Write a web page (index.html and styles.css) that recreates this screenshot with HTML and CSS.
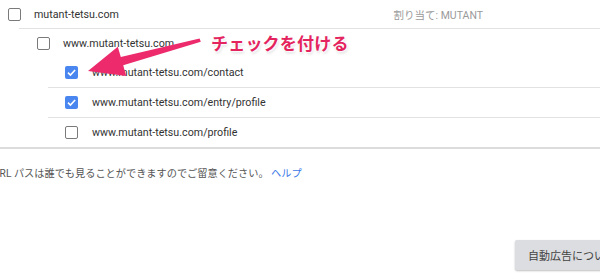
FILE: index.html
```html
<!DOCTYPE html>
<html lang="ja">
<head>
<meta charset="utf-8">
<link rel="stylesheet" href="styles.css">
</head>
<body>
<div class="page">
  <div class="tree">
    <div class="row r1">
      <span class="cb"></span>
      <span class="label">mutant-tetsu.com</span>
      <span class="assign">割り当て: MUTANT</span>
    </div>
    <div class="group">
      <div class="row r2">
        <span class="cb"></span>
        <span class="label">www.mutant-tetsu.com</span>
      </div>
      <div class="sub">
        <div class="row r3">
          <span class="cb checked"><svg viewBox="0 0 13 13" width="13" height="13"><path d="M3 6.7 L5.4 9 L10.1 4" fill="none" stroke="#fff" stroke-width="1.6"/></svg></span>
          <span class="label">www.mutant-tetsu.com/contact</span>
        </div>
        <div class="row r4 sep">
          <span class="cb checked"><svg viewBox="0 0 13 13" width="13" height="13"><path d="M3 6.7 L5.4 9 L10.1 4" fill="none" stroke="#fff" stroke-width="1.6"/></svg></span>
          <span class="label">www.mutant-tetsu.com/entry/profile</span>
        </div>
        <div class="row r5 sep">
          <span class="cb"></span>
          <span class="label">www.mutant-tetsu.com/profile</span>
        </div>
      </div>
    </div>
  </div>
  <p class="note">URL パスは誰でも見ることができますのでご留意ください。 <a class="help">ヘルプ</a></p>
  <div class="actions">
    <button class="btn">自動広告について</button>
  </div>

  <svg class="arrow" width="600" height="280" viewBox="0 0 600 280">
    <polygon points="88,71 117.8,46.8 120.8,57.1 199.6,38.4 200.8,41.8 123.2,65.2 126.2,76" fill="#ec2a6c"/>
  </svg>
  <div class="callout">チェックを付ける</div>
</div>
</body>
</html>
```
FILE: styles.css
```css
html, body {
  margin: 0;
  padding: 0;
  background: #fff;
  overflow: hidden;
}
.page {
  position: relative;
  width: 600px;
  height: 280px;
  overflow: hidden;
  font-family: Roboto, "Noto Sans CJK JP", sans-serif;
  font-size: 10.7px;
  color: #333;
}
.row {
  display: flex;
  align-items: center;
  height: 29px;
}
.r1 {
  height: 28px;
  padding-left: 8px;
}
.cb {
  width: 13px;
  height: 13px;
  box-sizing: border-box;
  border: 1.5px solid #7a7a7a;
  border-radius: 2px;
  flex: none;
  display: flex;
}
.cb.checked {
  border: none;
  background: #4a86f0;
}
.r1 .label { margin-left: 13px; }
.assign {
  margin-left: auto;
  margin-right: 117px;
  color: #9a9a9a;
  font-size: 10.5px;
}
.group {
  margin-left: 19px;
  border-top: 1px solid #e2e2e2;
}
.r2 {
  padding-left: 18px;
}
.r2 .label { margin-left: 13px; }
.sub {
  margin-left: 29px;
}
.r3, .r4, .r5 {
  padding-left: 17px;
}
.r3 .label, .r4 .label, .r5 .label { margin-left: 14px; }
.sep {
  border-top: 1px solid #e2e2e2;
}
.tree {
  border-bottom: 2px solid #dcdcdc;
}
.note {
  margin: 17px 0 0 -7px;
  color: #555;
  font-size: 10.2px;
  line-height: 16px;
}
.help {
  color: #3b78e7;
}
.actions {
  display: flex;
  justify-content: flex-end;
  margin-top: 58px;
  margin-right: -29px;
}
.btn {
  height: 30px;
  width: 114px;
  padding: 0 0 0 13px;
  text-align: left;
  border: none;
  border-radius: 2px;
  background: #dcdde0;
  color: #444;
  font-family: Roboto, "Noto Sans CJK JP", sans-serif;
  font-size: 11px;
  box-shadow: 0 1px 2px rgba(0,0,0,0.25);
  white-space: nowrap;
}
.arrow {
  position: absolute;
  left: 0;
  top: 0;
}
.callout {
  position: absolute;
  left: 211px;
  top: 30px;
  font-family: "Noto Sans CJK JP", sans-serif;
  font-weight: 700;
  font-size: 17px;
  color: #e4245f;
  text-shadow: 0 0 2px #fff, 1px 1px 2px #fff, -1px -1px 2px #fff, 1px 2px 3px rgba(0,0,0,0.18);
  letter-spacing: 0.2px;
  white-space: nowrap;
}
```
